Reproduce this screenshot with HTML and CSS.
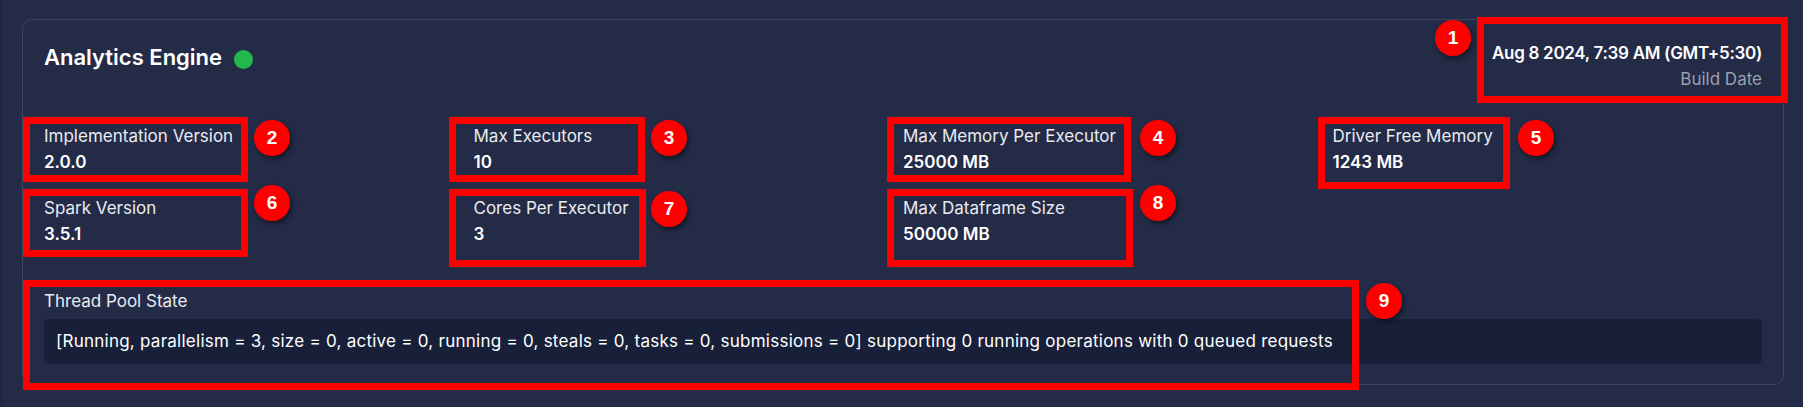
FILE: index.html
```html
<!DOCTYPE html>
<html lang="en">
<head>
<meta charset="utf-8">
<title>Analytics Engine</title>
<link rel="stylesheet" href="styles.css">
</head>
<body>
<div class="page">
  <div class="card">
    <div class="header">
      <div class="title">Analytics Engine <span class="dot"></span></div>
      <div class="build">
        <div class="build-date">Aug 8 2024, 7:39 AM (GMT+5:30)</div>
        <div class="build-label">Build Date</div>
      </div>
    </div>
    <div class="grid">
      <div class="stat"><div class="label">Implementation Version</div><div class="value">2.0.0</div></div>
      <div class="stat"><div class="label">Max Executors</div><div class="value">10</div></div>
      <div class="stat"><div class="label">Max Memory Per Executor</div><div class="value">25000 MB</div></div>
      <div class="stat"><div class="label">Driver Free Memory</div><div class="value">1243 MB</div></div>
      <div class="stat"><div class="label">Spark Version</div><div class="value">3.5.1</div></div>
      <div class="stat"><div class="label">Cores Per Executor</div><div class="value">3</div></div>
      <div class="stat"><div class="label">Max Dataframe Size</div><div class="value">50000 MB</div></div>
    </div>
    <div class="pool">
      <div class="label">Thread Pool State</div>
      <div class="code">[Running, parallelism = 3, size = 0, active = 0, running = 0, steals = 0, tasks = 0, submissions = 0] supporting 0 running operations with 0 queued requests</div>
    </div>
  </div>

  <div class="annot box b1"></div>
  <div class="annot box b2"></div>
  <div class="annot box b3"></div>
  <div class="annot box b4"></div>
  <div class="annot box b5"></div>
  <div class="annot box b6"></div>
  <div class="annot box b7"></div>
  <div class="annot box b8"></div>
  <div class="annot box b9"></div>

  <div class="annot badge n1">1</div>
  <div class="annot badge n2">2</div>
  <div class="annot badge n3">3</div>
  <div class="annot badge n4">4</div>
  <div class="annot badge n5">5</div>
  <div class="annot badge n6">6</div>
  <div class="annot badge n7">7</div>
  <div class="annot badge n8">8</div>
  <div class="annot badge n9">9</div>
</div>
</body>
</html>
```

FILE: styles.css
```css
* { box-sizing: border-box; }

html, body {
  margin: 0;
  padding: 0;
  background: #232b47;
}

body {
  font-family: Inter, "Noto Sans", sans-serif;
  color: #eef0f5;
  border-left: 3px solid #1e2640;
  min-height: 407px;
}

.page {
  position: relative;
  padding: 19px 19px 20px 19px;
}

.card {
  border: 1px solid #3b4561;
  border-radius: 10px;
  padding: 21px 21px 20px 21px;
  background: #232b47;
}

.header {
  display: flex;
  justify-content: space-between;
  align-items: flex-start;
  margin-bottom: 32px;
}

.title {
  display: flex;
  align-items: center;
  gap: 12px;
  font-size: 22px;
  font-weight: 600;
  line-height: 33px;
  color: #ffffff;
}

.dot {
  width: 19px;
  height: 19px;
  border-radius: 50%;
  background: #22b94c;
  margin-top: 4px;
}

.build {
  text-align: right;
  font-size: 17px;
  line-height: 25.5px;
}

.build-date {
  font-weight: 600;
  color: #ffffff;
  letter-spacing: -0.3px;
}

.build-label {
  color: #9aa0ad;
}

.grid {
  display: grid;
  grid-template-columns: repeat(4, 1fr);
  row-gap: 21px;
}

.label {
  font-size: 17px;
  line-height: 25.5px;
  color: #e9ebf1;
}

.value {
  font-size: 17px;
  line-height: 25.5px;
  font-weight: 600;
  color: #ffffff;
}

.pool {
  margin-top: 42px;
}

.code {
  margin-top: 4px;
  background: #182039;
  border-radius: 5px;
  padding: 10px 12px;
  font-size: 17px;
  line-height: 25.5px;
  letter-spacing: 0.25px;
  color: #ffffff;
}

/* annotation overlay */
.annot { position: absolute; }

.box {
  border: 7px solid #ff0000;
}

.b1 { left: 1474px; top: 17px; width: 311px; height: 86px; }
.b2 { left: 20px; top: 117px; width: 225px; height: 65px; }
.b3 { left: 446px; top: 117px; width: 196px; height: 65px; }
.b4 { left: 884px; top: 117px; width: 244px; height: 65px; }
.b5 { left: 1315px; top: 117px; width: 192px; height: 72px; }
.b6 { left: 20px; top: 189px; width: 225px; height: 68px; }
.b7 { left: 446px; top: 189px; width: 197px; height: 78px; }
.b8 { left: 884px; top: 189px; width: 246px; height: 78px; }
.b9 { left: 20px; top: 280px; width: 1336px; height: 110px; }

.badge {
  width: 36px;
  height: 36px;
  border-radius: 50%;
  background: #ff0000;
  color: #ffffff;
  font-family: "Liberation Sans", Arial, sans-serif;
  font-weight: 700;
  font-size: 19px;
  line-height: 36px;
  text-align: center;
  box-shadow: 2px 3px 5px rgba(0, 0, 0, 0.45);
}

.n1 { left: 1432px; top: 20px; }
.n2 { left: 251px; top: 120px; }
.n3 { left: 648px; top: 120px; }
.n4 { left: 1137px; top: 120px; }
.n5 { left: 1515px; top: 120px; }
.n6 { left: 251px; top: 185px; }
.n7 { left: 648px; top: 191px; }
.n8 { left: 1137px; top: 185px; }
.n9 { left: 1363px; top: 283px; }
```
